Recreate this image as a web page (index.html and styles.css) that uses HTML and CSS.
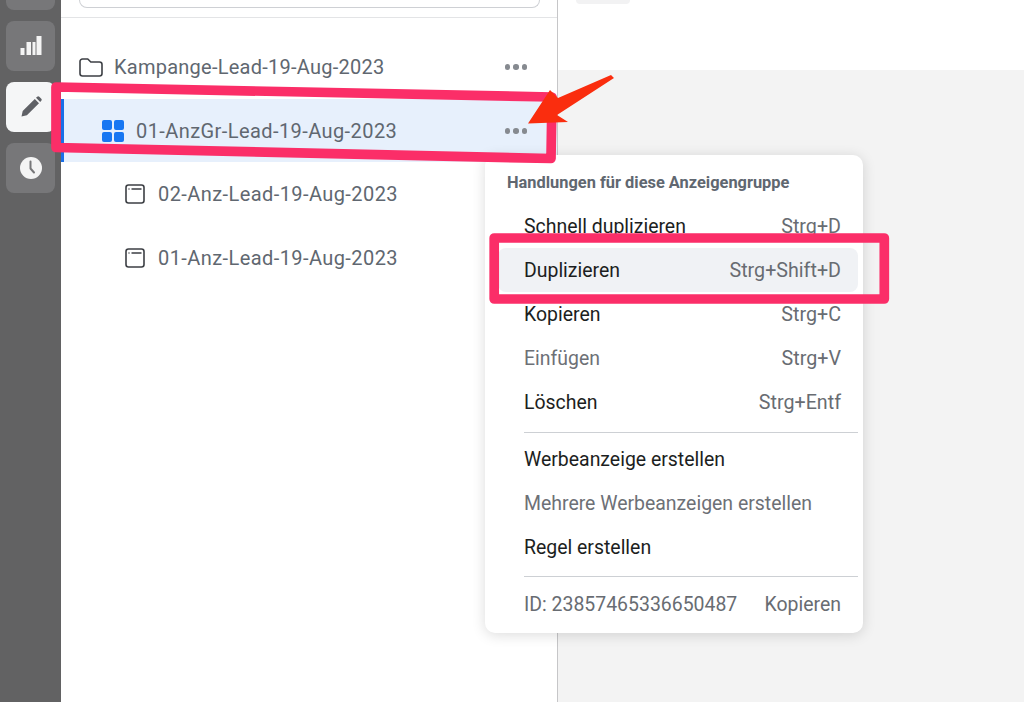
FILE: index.html
```html
<!DOCTYPE html>
<html lang="de">
<head>
<meta charset="utf-8">
<title>Anzeigengruppe</title>
<link rel="stylesheet" href="styles.css">
</head>
<body>
<div class="app">
  <nav class="rail">
    <div class="rail-btn"></div>
    <div class="rail-btn">
      <svg width="24" height="24" viewBox="0 0 24 24"><path class="rail-glyph" d="M1.500 21h4v-7h-4zM7.500 21H12V8H7.500zM13.500 21h3V8h-3zM17.500 21h5V2h-5z"/></svg>
    </div>
    <div class="rail-btn active">
      <svg width="24" height="24" viewBox="0 0 24 24"><path class="pencil" d="M2.500 21.500l1.200-5.400L15.800 4l4.200 4.200L7.900 20.300zM17 2.800l1.200-1.100a1.500 1.500 0 0 1 2.100 0l2 2a1.500 1.500 0 0 1 0 2.100L21.200 7z"/></svg>
    </div>
    <div class="rail-btn">
      <svg width="24" height="24" viewBox="0 0 24 24"><circle class="rail-glyph" cx="12" cy="12" r="11"/><path class="clock-hand" d="M11.500 5.500v7l3.500 4"/></svg>
    </div>
  </nav>
  <section class="tree">
    <div class="search-wrap"><div class="search"></div></div>
    <div class="rows">
      <div class="row campaign">
        <svg class="ico" width="24" height="22" viewBox="0 0 24 22"><path class="outline" d="M1 5.500A2.500 2.500 0 0 1 3.500 3h5.300l3 3h8.700A2.500 2.500 0 0 1 23 8.500v9a2.500 2.500 0 0 1-2.500 2.500h-17A2.500 2.500 0 0 1 1 17.500z"/></svg>
        <span class="label">Kampange-Lead-19-Aug-2023</span>
        <span class="dots"><i></i><i></i><i></i></span>
      </div>
      <div class="row level1 selected">
        <svg class="ico" width="24" height="24" viewBox="0 0 24 24"><g class="blue"><rect x="1" y="1" width="10" height="10" rx="2"/><rect x="13" y="1" width="10" height="10" rx="2"/><rect x="1" y="13" width="10" height="10" rx="2"/><rect x="13" y="13" width="10" height="10" rx="2"/></g></svg>
        <span class="label">01-AnzGr-Lead-19-Aug-2023</span>
        <span class="dots"><i></i><i></i><i></i></span>
      </div>
      <div class="row level2">
        <svg class="ico" width="20" height="20" viewBox="0 0 20 20"><rect class="outline" x="1" y="1" width="18" height="18" rx="2.500"/><path class="outline" d="M3.500 5h1M6.500 5h10"/></svg>
        <span class="label">02-Anz-Lead-19-Aug-2023</span>
      </div>
      <div class="row level2">
        <svg class="ico" width="20" height="20" viewBox="0 0 20 20"><rect class="outline" x="1" y="1" width="18" height="18" rx="2.500"/><path class="outline" d="M3.500 5h1M6.500 5h10"/></svg>
        <span class="label">01-Anz-Lead-19-Aug-2023</span>
      </div>
    </div>
  </section>
  <main class="content">
    <div class="toolbar"><div class="pill"></div></div>
    <div class="canvas"></div>
  </main>
</div>

<div class="menu">
  <div class="menu-title">Handlungen für diese Anzeigengruppe</div>
  <div class="item"><span>Schnell duplizieren</span><span class="key">Strg+D</span></div>
  <div class="item hover"><span>Duplizieren</span><span class="key">Strg+Shift+D</span></div>
  <div class="item"><span>Kopieren</span><span class="key">Strg+C</span></div>
  <div class="item disabled"><span>Einfügen</span><span class="key">Strg+V</span></div>
  <div class="item"><span>Löschen</span><span class="key">Strg+Entf</span></div>
  <div class="sep first"></div>
  <div class="item"><span>Werbeanzeige erstellen</span></div>
  <div class="item disabled"><span>Mehrere Werbeanzeigen erstellen</span></div>
  <div class="item"><span>Regel erstellen</span></div>
  <div class="sep"></div>
  <div class="item id-row"><span>ID: 23857465336650487</span><span>Kopieren</span></div>
</div>

<svg class="marks" width="1024" height="702" viewBox="0 0 1024 702">
  <path class="mark" d="M56 87L552 97L551 158.500L56 147.500z"/>
  <path class="mark" d="M494.200 238H884.300V299H494.200z"/>
  <path class="arrow" d="M614 78L557 115L568 122L528 123.500L550 90L558 98L611 75z"/>
</svg>
</body>
</html>
```
FILE: styles.css
```css
* { box-sizing: border-box; }
html, body { margin: 0; height: 100%; overflow: hidden; }
body { font-family: Roboto, "Liberation Sans", sans-serif; background: #fff; color: #1c1e21; position: relative; }

.app { display: flex; width: 1024px; height: 702px; overflow: hidden; }

.rail { width: 61px; flex: none; background: #626263; padding: 0 6px; margin-top: -40px; height: 742px; display: flex; flex-direction: column; gap: 11px; }
.rail-btn { height: 50px; background: #777779; border-radius: 8px; display: flex; align-items: center; justify-content: center; }
.rail-btn.active { background: #f5f6f7; }
.rail-glyph { fill: #f4f4f4; }
.pencil { fill: #5f6166; }
.clock-hand { fill: none; stroke: #777779; stroke-width: 2; stroke-linecap: round; stroke-linejoin: round; }

.tree { width: 497px; flex: none; background: #fff; border-right: 1px solid #c6c6c8; display: flex; flex-direction: column; }
.search-wrap { height: 18px; padding: 0 17px 0 18px; border-bottom: 1px solid #e3e4e6; }
.search { height: 8px; border: 1px solid #ced0d4; border-top: 0; border-radius: 0 0 8px 8px; }
.rows { padding-top: 17px; }
.row { height: 63.500px; display: flex; align-items: center; padding-left: 18px; padding-right: 30px; font-size: 20px; color: #606770; letter-spacing: .42px; }
.row + .row { padding-top: 1px; }
.row.campaign { letter-spacing: .25px; }
.row.level2 { padding-left: 64px; }
.row.selected { background: #e7f0fc; border-left: 3px solid #1a6fe8; padding-left: 37px; }
.ico { flex: none; margin-right: 11px; }
.level2 .ico { margin-right: 13px; }
.label { flex: 1; white-space: nowrap; }
.outline { fill: none; stroke: #3c3f44; stroke-width: 1.600; stroke-linejoin: round; }
.blue rect { fill: #1877f2; }
.dots { display: flex; gap: 3px; }
.dots i { width: 5.500px; height: 5.500px; border-radius: 50%; background: #868a90; }

.content { flex: 1; display: flex; flex-direction: column; }
.toolbar { height: 70px; background: #fff; padding-left: 18px; }
.pill { width: 54px; height: 4px; background: #f2f2f3; border-radius: 0 0 6px 6px; }
.canvas { flex: 1; background: #f3f3f3; }

.menu { position: absolute; left: 485px; top: 155px; width: 378px; height: 478px; background: #fff; border-radius: 10px; box-shadow: 0 2px 14px rgba(0,0,0,.14); padding: 0 22px 0 39px; font-size: 19.450px; }
.menu-title { margin-left: -17px; height: 49px; padding-top: 19px; line-height: 18px; font-size: 16.400px; font-weight: 700; color: #606770; white-space: nowrap; }
.item { height: 44.200px; display: flex; align-items: center; justify-content: space-between; white-space: nowrap; position: relative; color: #1c1e21; }
.item > span { position: relative; }
.key { color: #686c72; font-size: 19.700px; }
.disabled { color: #6d7076; }
.hover::before { content: ""; position: absolute; left: -26px; right: -17px; top: 0; bottom: 0; background: #f0f2f5; border-radius: 8px; }
.sep { height: 1px; background: #cdd0d4; margin: 6px -17px 5px 0; }
.sep.first { margin-top: 7px; margin-bottom: 4.500px; }
.id-row { color: #686c72; }

.marks { position: absolute; left: 0; top: 0; pointer-events: none; }
.mark { fill: none; stroke: #fb2e68; stroke-width: 9.700; stroke-linejoin: round; }
.arrow { fill: #fa2d0e; }
```
